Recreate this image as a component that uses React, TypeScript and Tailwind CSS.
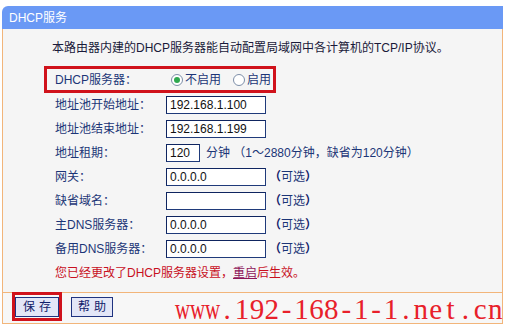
import React from 'react';

const FONT = { fontFamily: '"Liberation Sans", "Noto Sans CJK SC", sans-serif' };

function Radio({ checked }: { checked?: boolean }) {
  return (
    <span className="w-[12px] h-[12px] rounded-full border border-[#7d8ea8] bg-white flex items-center justify-center">
      {checked && <span className="w-[6px] h-[6px] rounded-full bg-[#2fa84f]" />}
    </span>
  );
}

function Field({ value, w = 'w-[100px]' }: { value?: string; w?: string }) {
  return (
    <div className={`${w} h-[18px] bg-white border border-[#1f3a7a] border-t-[#0f2560] border-l-[#0f2560] flex items-center pl-[3px] text-[12px] text-[#111]`}>
      {value}
    </div>
  );
}

function Row({ label, children }: { label: string; children: React.ReactNode }) {
  return (
    <div className="flex h-[24px] items-center">
      <div className="w-[111px] text-[12px] text-[#1c3577]">{label}</div>
      {children}
    </div>
  );
}

const Optional = () => (
  <span className="ml-[3px] text-[12px] text-[#1c3577]">
    <b className="text-[#10206a]">（</b>可选<b className="text-[#10206a]">）</b>
  </span>
);

const WATERMARK = 'www.192-168-1-1.net.cn';

export default function App() {
  return (
    <div className="w-[507px] h-[327px] bg-white pt-[6px] px-[2px] relative overflow-hidden" style={FONT}>
      <div className="w-[501px]">
        {/* ── HEADER ─────────────────────────────── */}
        <div className="h-[23px] bg-[#6a99f5] rounded-tl-[6px] flex items-center pl-[7px] text-[12px] text-white">
          DHCP服务
        </div>

        {/* ── BODY ───────────────────────────────── */}
        <div className="h-[263px] bg-[#f5f5f5] border-x border-[#f2b57a] flex flex-col">
          <div className="mt-[11px] h-[16px] pl-[49px] text-[12px] leading-[16px] text-[#1a1a3a]">
            本路由器内建的DHCP服务器能自动配置局域网中各计算机的TCP/IP协议。
          </div>

          <div className="mt-[10px] ml-[41px] w-[232px] h-[27px] border-[3px] border-[#d0121b] flex items-center pl-[8px]">
            <div className="w-[116px] text-[12px] text-[#1c3577]">DHCP服务器：</div>
            <Radio checked />
            <span className="ml-[2px] text-[12px] text-[#1c3577]">不启用</span>
            <span className="ml-[12px]"><Radio /></span>
            <span className="ml-[2px] text-[12px] text-[#1c3577]">启用</span>
          </div>

          <div className="pl-[52px] flex flex-col">
            <Row label="地址池开始地址："><Field value="192.168.1.100" /></Row>
            <Row label="地址池结束地址："><Field value="192.168.1.199" /></Row>
            <Row label="地址租期：">
              <Field value="120" w="w-[34px]" />
              <span className="ml-[6px] text-[12px] text-[#1c3577]">分钟 （1～2880分钟，缺省为120分钟）</span>
            </Row>
            <Row label="网关："><Field value="0.0.0.0" /><Optional /></Row>
            <Row label="缺省域名："><Field /><Optional /></Row>
            <Row label="主DNS服务器："><Field value="0.0.0.0" /><Optional /></Row>
            <Row label="备用DNS服务器："><Field value="0.0.0.0" /><Optional /></Row>
            <div className="h-[24px] flex items-center text-[12px] text-[#c8101e]">
              您已经更改了DHCP服务器设置，
              <span className="underline text-[#8e1459]">重启</span>
              后生效。
            </div>
          </div>
        </div>

        {/* ── FOOTER ─────────────────────────────── */}
        <div className="h-[32px] bg-[#f7f7f7] border border-[#f2b57a] flex items-start pl-[9px]">
          <div className="-mt-[1px] w-[50px] h-[29px] border-[3px] border-[#d0121b] flex items-center justify-center">
            <button className="w-[44px] h-[20px] bg-[#e3e6f7] border border-[#1f3380] text-[12px] text-[#10206a] tracking-[4px] pl-[4px]">
              保存
            </button>
          </div>
          <button className="ml-[9px] mt-[4px] w-[42px] h-[20px] bg-[#e3e6f7] border border-[#1f3380] text-[12px] text-[#10206a] tracking-[4px] pl-[4px]">
            帮助
          </button>
        </div>
      </div>

      {/* watermark overlay */}
      <div className="absolute left-[175px] top-[293px] h-[32px] flex text-[#e8202a] text-[29px] leading-[32px]" style={{ fontFamily: '"Liberation Serif", serif' }}>
        {WATERMARK.split('').map((c, i) => (
          <span key={i} className="w-[14.9px] flex justify-center">
            <span className={c === 'w' ? 'inline-block scale-x-[0.72]' : ''}>{c}</span>
          </span>
        ))}
      </div>
    </div>
  );
}
